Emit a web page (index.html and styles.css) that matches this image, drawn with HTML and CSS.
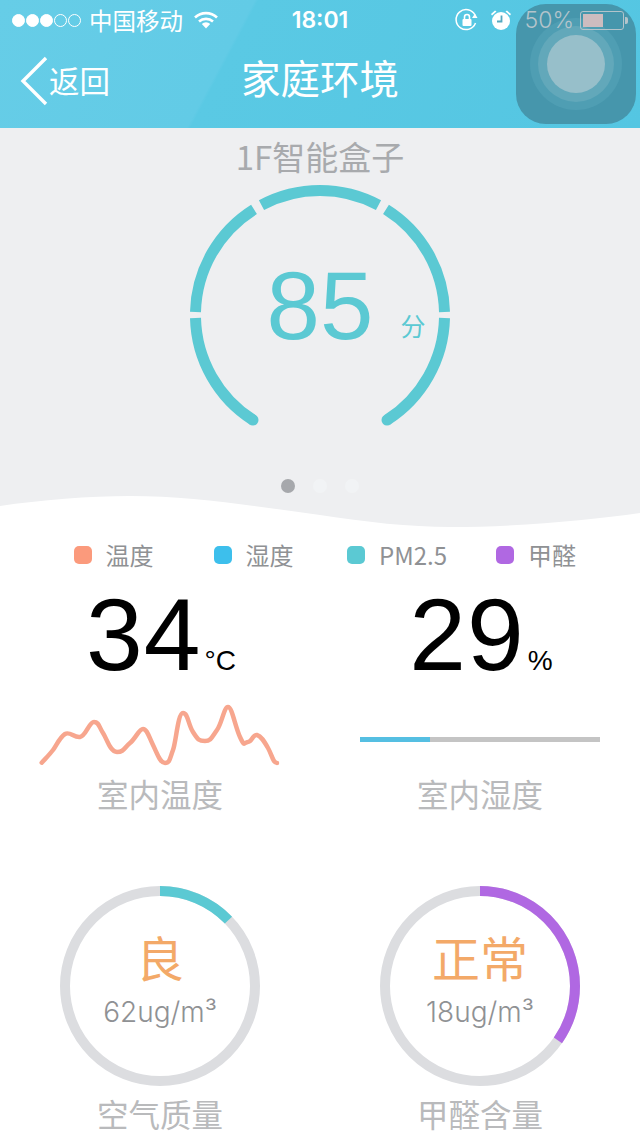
FILE: index.html
```html
<!DOCTYPE html>
<html lang="zh-CN">
<head>
  <meta charset="UTF-8" />
  <meta name="viewport" content="width=device-width, initial-scale=1.0"/>
  <title>家庭环境</title>
  <link rel="stylesheet" href="styles.css">
</head>
<body>
  <header class="header">
    <div class="status-bar">
      <div class="status-left">
        <span class="signal">
          <i class="on"></i><i class="on"></i><i class="on"></i><i></i><i></i>
        </span>
        <span class="carrier">中国移动</span>
        <svg class="wifi" viewBox="0 0 24 18" width="24" height="18">
          <path d="M1 6.5 A16 16 0 0 1 23 6.5" />
          <path d="M5 10.5 A10.5 10.5 0 0 1 19 10.5" />
          <path class="wifi-tip" d="M7.8 13 A6 6 0 0 1 16.2 13 L12 17.5 Z" />
        </svg>
      </div>
      <div class="status-time">18:01</div>
      <div class="status-right">
        <svg class="status-icon" viewBox="0 0 24 24" width="24" height="24">
          <path class="icon-line" d="M20.5 15 A10 10 0 1 1 20 7" />
          <path class="icon-fill" d="M22.5 10 L17 10 L20 5.5 Z" />
          <rect class="icon-fill" x="7.5" y="11" width="9" height="7" rx="1" />
          <path class="icon-line thin" d="M9.5 11 V9 A2.5 2.5 0 0 1 14.5 9 V11" />
        </svg>
        <svg class="status-icon alarm" viewBox="0 0 22 22" width="22" height="22">
          <circle class="icon-fill" cx="11" cy="12" r="9" />
          <path class="icon-fill" d="M1 5 L5 1.5 L6.5 2.5 L2 6.5 Z M21 5 L17 1.5 L15.5 2.5 L20 6.5 Z" />
          <path class="alarm-hand" d="M11.5 6.5 V12.5 H7" />
        </svg>
        <span class="battery-text">50%</span>
        <span class="battery"><i class="battery-level"></i></span>
        <i class="battery-tip"></i>
      </div>
    </div>
    <nav class="nav-bar">
      <a class="back">
        <svg viewBox="0 0 30 50" width="30" height="50">
          <path d="M27 2 L4 25 L27 48" />
        </svg>
        <span>返回</span>
      </a>
      <h1 class="nav-title">家庭环境</h1>
    </nav>
    <div class="assistive">
      <span class="assistive-outer"><span class="assistive-mid"><span class="assistive-core"></span></span></span>
    </div>
  </header>

  <section class="panel">
    <h2 class="panel-title">1F智能盒子</h2>
    <div class="gauge">
      <svg class="gauge-arc" viewBox="0 0 270 250" width="270" height="250">
        <path d="M69 24.4 A124.5 124.5 0 0 0 10.5 127" />
        <path d="M10.5 133 A124.5 124.5 0 0 0 68 235" />
        <path d="M76.5 20.1 A124.5 124.5 0 0 1 193.5 20.1" />
        <path d="M201 24.4 A124.5 124.5 0 0 1 259.5 127" />
        <path d="M259.5 133 A124.5 124.5 0 0 1 202 235" />
        <circle class="gauge-cap" cx="68" cy="235" r="5.5" />
        <circle class="gauge-cap" cx="202" cy="235" r="5.5" />
      </svg>
      <div class="score"><span>85</span><span class="score-unit">分</span></div>
    </div>
    <div class="dots">
      <i class="dot active"></i><i class="dot"></i><i class="dot"></i>
    </div>
    <svg class="wave" viewBox="0 0 640 35" width="640" height="35">
      <path d="M0 11 C40 5 90 1 130 1 C195 1 260 12 320 20 C365 27 410 32 450 32 C520 32 590 25 640 18 L640 35 L0 35 Z" />
    </svg>
  </section>

  <section class="legend">
    <div class="legend-item"><i class="swatch temp"></i>温度</div>
    <div class="legend-item"><i class="swatch humid"></i>湿度</div>
    <div class="legend-item"><i class="swatch pm"></i>PM2.5</div>
    <div class="legend-item"><i class="swatch voc"></i>甲醛</div>
  </section>

  <section class="metrics">
    <div class="metric">
      <div class="metric-value">34<span class="metric-unit">°C</span></div>
      <svg class="spark" viewBox="0 700 320 68" width="320" height="68">
        <path d="M41.7 762.7 C47 757 50 754 53 750 S60 737 65 734 S74 738 80 737 S89 722 94 722 S99 727 103 733 S110 752 117 752 S124 748 130 743 S139 729 143 729 S149 737 153 745 S160 763 165 763 S170 758 173 750 S178 713 183 713 S188 724 193 732 S199 741 205 741 S212 737 217 730 S224 707 228 707 S235 726 240 737 S244 742 248 742 S253 734 257 735 S264 741 268 748 S273 763 277 763" />
      </svg>
      <div class="metric-label">室内温度</div>
    </div>
    <div class="metric">
      <div class="metric-value">29<span class="metric-unit">%</span></div>
      <div class="bar-slot">
        <div class="bar"><div class="bar-fill" style="width: 29%"></div></div>
      </div>
      <div class="metric-label">室内湿度</div>
    </div>
  </section>

  <section class="rings">
    <div class="ring-col">
      <div class="ring">
        <svg viewBox="0 0 200 200" width="200" height="200">
          <circle class="ring-track" cx="100" cy="100" r="95" />
          <circle class="ring-value teal" cx="100" cy="100" r="95" pathLength="100" stroke-dasharray="12.8 100" />
        </svg>
        <div class="ring-text">
          <div class="ring-grade">良</div>
          <div class="ring-amount">62ug/m³</div>
        </div>
      </div>
      <div class="metric-label">空气质量</div>
    </div>
    <div class="ring-col">
      <div class="ring">
        <svg viewBox="0 0 200 200" width="200" height="200">
          <circle class="ring-track" cx="100" cy="100" r="95" />
          <circle class="ring-value purple" cx="100" cy="100" r="95" pathLength="100" stroke-dasharray="34.7 100" />
        </svg>
        <div class="ring-text">
          <div class="ring-grade">正常</div>
          <div class="ring-amount">18ug/m³</div>
        </div>
      </div>
      <div class="metric-label">甲醛含量</div>
    </div>
  </section>
</body>
</html>
```

FILE: styles.css
```css
* {
  box-sizing: border-box;
}

html, body {
  margin: 0;
  height: 1136px;
  overflow: hidden;
}

body {
  width: 640px;
  background: #fff;
  font-family: "Noto Sans CJK SC", "Noto Sans", sans-serif;
}

i {
  display: block;
}

/* header */
.header {
  position: relative;
  height: 128px;
  color: #fff;
  background: linear-gradient(118deg, #66cde7 0%, #62cbe6 36%, #5ac9e4 36.5%, #54c6e2 100%);
}

.status-bar {
  position: relative;
  z-index: 2;
  display: grid;
  grid-template-columns: 1fr auto 1fr;
  align-items: center;
  height: 40px;
  padding: 0 12px 0 12px;
}

.status-left, .status-right {
  display: flex;
  align-items: center;
}

.status-right {
  justify-content: flex-end;
}

.signal {
  display: flex;
  gap: 1px;
  margin-right: 8px;
}

.signal i {
  width: 13px;
  height: 13px;
  border: 1px solid #fff;
  border-radius: 50%;
}

.signal i.on {
  background: #fff;
}

.carrier {
  font-size: 23.5px;
  line-height: 40px;
}

.wifi {
  margin-left: 11px;
}

.wifi path {
  fill: none;
  stroke: #fff;
  stroke-width: 2.6;
}

.wifi .wifi-tip {
  fill: #fff;
  stroke: none;
}

.status-time {
  font-family: "Inter", sans-serif;
  font-size: 23px;
  font-weight: 600;
}

.status-icon {
  margin-right: 11px;
}

.status-icon.alarm {
  margin-right: 13px;
}

.icon-fill {
  fill: #fff;
}

.icon-line {
  fill: none;
  stroke: #fff;
  stroke-width: 1.5;
}

.icon-line.thin {
  stroke-width: 1.6;
}

.alarm-hand {
  fill: none;
  stroke: #55a9c0;
  stroke-width: 1.8;
}

.battery-text {
  font-family: "Inter", sans-serif;
  font-size: 23px;
  font-weight: 300;
  color: #b3c4cb;
  margin-right: 6px;
}

.battery {
  width: 44px;
  height: 19px;
  padding: 2px;
  border: 1px solid #b3c4cb;
  border-radius: 3px;
}

.battery-level {
  width: 20px;
  height: 100%;
  background: #cdbcbf;
}

.battery-tip {
  width: 3px;
  height: 7px;
  background: #b3c4cb;
  border-radius: 0 2px 2px 0;
  margin-left: 1px;
}

.nav-bar {
  position: relative;
  height: 88px;
  display: flex;
  align-items: center;
  justify-content: center;
}

.back {
  position: absolute;
  left: 19px;
  top: 16px;
  display: flex;
  align-items: center;
  font-size: 30.5px;
  line-height: 50px;
}

.back span {
  margin-top: -3px;
}

.back svg {
  display: block;
}

.back path {
  fill: none;
  stroke: #fff;
  stroke-width: 3.4;
}

.nav-title {
  margin: 0;
  font-size: 39.5px;
  font-weight: 400;
  line-height: 50px;
  padding-bottom: 14px;
}

.assistive {
  position: absolute;
  left: 516px;
  top: 4px;
  width: 120px;
  height: 120px;
  border-radius: 30px;
  display: flex;
  align-items: center;
  justify-content: center;
  background: #4696ac;
}

.assistive-outer, .assistive-mid, .assistive-core {
  display: flex;
  align-items: center;
  justify-content: center;
  border-radius: 50%;
}

.assistive-outer {
  width: 92px;
  height: 92px;
  background: #4f9eb3;
}

.assistive-mid {
  width: 76px;
  height: 76px;
  background: #62a8ba;
}

.assistive-core {
  width: 58px;
  height: 58px;
  background: #97bfca;
}

/* gauge panel */
.panel {
  background: #eeeff1;
  height: 402px;
}

.panel-title {
  margin: 0;
  height: 57px;
  font-size: 33px;
  font-weight: 400;
  line-height: 57px;
  text-align: center;
  color: #a8aaad;
}

.gauge {
  display: grid;
  justify-content: center;
  height: 286px;
}

.gauge-arc {
  grid-area: 1 / 1;
  display: block;
}

.gauge-arc path {
  fill: none;
  stroke: #5bc9d3;
  stroke-width: 11;
}

.gauge-cap {
  fill: #5bc9d3;
}

.score {
  grid-area: 1 / 1;
  position: relative;
  justify-self: center;
  align-self: start;
  margin-top: 71px;
  height: 100px;
  font-family: "Liberation Sans", sans-serif;
  font-size: 96px;
  line-height: 100px;
  color: #5bc9d3;
}

.score-unit {
  position: absolute;
  left: 134px;
  top: 52px;
  width: 30px;
  font-family: "Noto Sans CJK SC", sans-serif;
  font-size: 25px;
  line-height: 34px;
}

.dots {
  display: flex;
  justify-content: center;
  align-items: center;
  gap: 18px;
  height: 18px;
  margin-top: 6px;
}

.dot {
  width: 14px;
  height: 14px;
  border-radius: 50%;
  background: #f1f3f5;
}

.dot.active {
  background: #a6a8ac;
}

.wave {
  display: block;
}

.wave path {
  fill: #fff;
}

/* legend */
.legend {
  display: grid;
  grid-template-columns: 139px 141px 146px 132px;
  padding-left: 44px;
  height: 50px;
  align-items: center;
}

.legend-item {
  display: flex;
  align-items: center;
  justify-content: center;
  gap: 14px;
  font-size: 24px;
  line-height: 50px;
  color: #8f9194;
}

.swatch {
  width: 18px;
  height: 18px;
  border-radius: 5px;
}

.swatch.temp { background: #fb9a7c; }
.swatch.humid { background: #3dbfec; }
.swatch.pm { background: #5bc9d3; }
.swatch.voc { background: #b068e2; }

/* metrics */
.metrics {
  display: grid;
  grid-template-columns: 320px 320px;
}

.metric, .ring-col {
  display: flex;
  flex-direction: column;
  align-items: center;
}

.metric-value {
  height: 120px;
  padding-left: 2px;
  font-family: "Liberation Sans", sans-serif;
  font-size: 102px;
  letter-spacing: 1px;
  line-height: 110px;
  color: #000;
}

.metric-unit {
  font-size: 28px;
  letter-spacing: 0;
  margin-left: 3px;
}

.spark {
  display: block;
}

.spark path {
  fill: none;
  stroke: #f7a68e;
  stroke-width: 4.5;
  stroke-linecap: round;
}

.bar-slot {
  width: 320px;
  height: 68px;
  padding: 37px 40px 0;
}

.bar {
  height: 5px;
  background: #c4c4c4;
}

.bar-fill {
  height: 100%;
  background: #55bfe2;
}

.metric-label {
  height: 50px;
  font-size: 31.5px;
  line-height: 50px;
  color: #b9babc;
}

/* rings */
.rings {
  display: grid;
  grid-template-columns: 320px 320px;
  margin-top: 68px;
}

.ring {
  display: grid;
  width: 200px;
  height: 200px;
  margin-bottom: 2px;
}

.ring svg, .ring-text {
  grid-area: 1 / 1;
}

.ring svg {
  display: block;
}

.ring-track, .ring-value {
  fill: none;
  stroke-width: 10;
}

.ring-track {
  stroke: #dcdde0;
}

.ring-value {
  transform: rotate(-90deg);
  transform-origin: 100px 100px;
}

.ring-value.teal { stroke: #5bc9d3; }
.ring-value.purple { stroke: #b068e2; }

.ring-text {
  display: flex;
  flex-direction: column;
  align-items: center;
  padding-top: 40px;
}

.ring-grade {
  font-size: 48px;
  line-height: 60px;
  margin-bottom: 8px;
  color: #f3a968;
}

.ring-amount {
  font-family: "Inter", sans-serif;
  font-size: 28px;
  font-weight: 300;
  line-height: 36px;
  color: #8f9194;
}
```
